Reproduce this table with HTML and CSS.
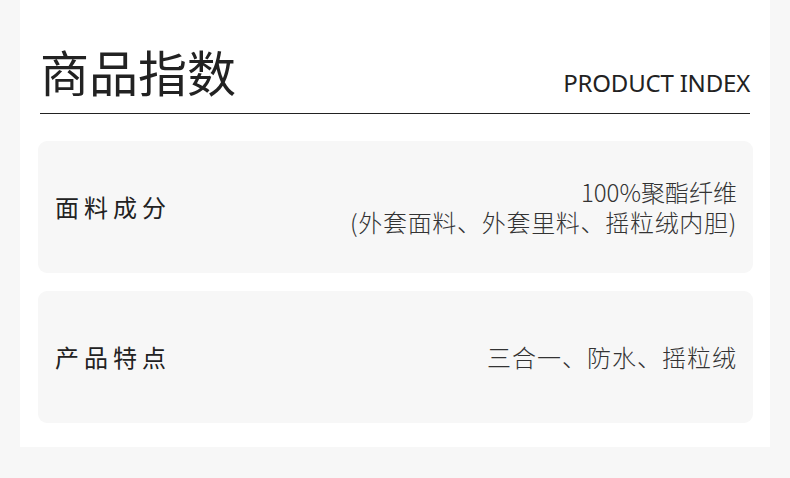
FILE: index.html
```html
<!DOCTYPE html>
<html lang="zh-CN">
<head>
<meta charset="utf-8">
<title>商品指数</title>
<link rel="stylesheet" href="styles.css">
</head>
<body>
<main class="panel">
  <header class="header">
    <h1 class="title">商品指数</h1>
    <span class="subtitle">PRODUCT INDEX</span>
  </header>
  <section class="cards">
    <div class="card">
      <div class="label">面料成分</div>
      <div class="value">
        <div>100%聚酯纤维</div>
        <div class="wide">(外套面料、外套里料、摇粒绒内胆)</div>
      </div>
    </div>
    <div class="card">
      <div class="label">产品特点</div>
      <div class="value">
        <div class="spaced">三合一、防水、摇粒绒</div>
      </div>
    </div>
  </section>
</main>
</body>
</html>
```

FILE: styles.css
```css
html, body {
  margin: 0;
  padding: 0;
  background: #f7f7f7;
}
body {
  font-family: "Noto Sans CJK SC", "Noto Sans", sans-serif;
  color: #222;
}
.panel {
  margin: 0 20px;
  background: #fff;
  padding: 0 17px 24px 18px;
  height: 447px;
  box-sizing: border-box;
}
.header {
  margin: 0 3px 0 2px;
  padding-top: 47px;
  padding-bottom: 18px;
  border-bottom: 1px solid #222;
  display: flex;
  justify-content: space-between;
  align-items: flex-end;
}
.title {
  margin: 0;
  font-size: 49px;
  line-height: 48px;
  font-weight: 400;
  color: #222;
}
.subtitle {
  font-family: "Noto Sans", sans-serif;
  font-size: 24px;
  line-height: 24px;
  color: #222;
  letter-spacing: -0.2px;
}
.cards {
  margin-top: 27px;
  display: flex;
  flex-direction: column;
  gap: 18px;
}
.card {
  height: 132px;
  background: #f7f7f7;
  border-radius: 9px;
  display: flex;
  align-items: center;
  justify-content: space-between;
  padding: 0 16px 0 17px;
}
.label {
  font-size: 24px;
  line-height: 30px;
  font-weight: 400;
  letter-spacing: 5px;
  color: #222;
}
.value {
  text-align: right;
  font-size: 24px;
  line-height: 30px;
  font-weight: 300;
  color: #333;
}
.wide {
  letter-spacing: 0.7px;
}
.spaced {
  letter-spacing: 1px;
}
```
